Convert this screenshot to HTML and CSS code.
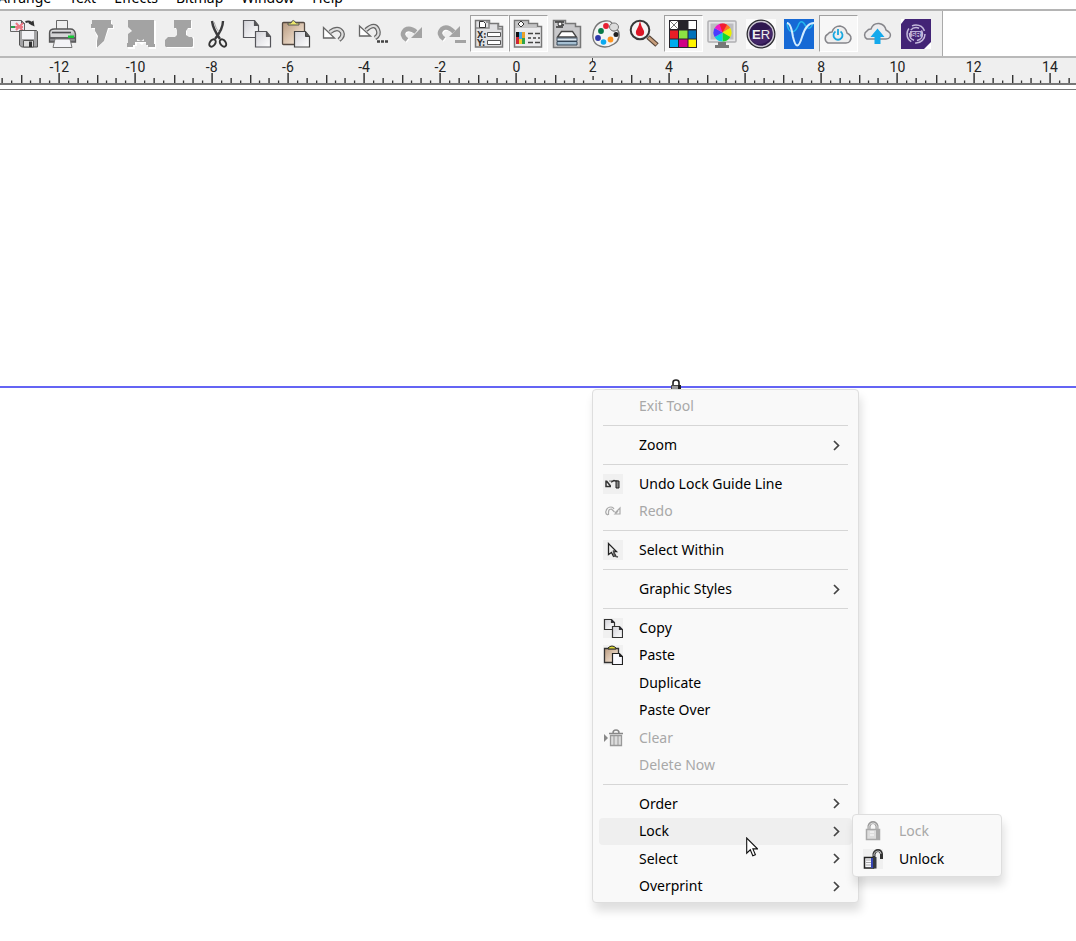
FILE: index.html
```html
<!DOCTYPE html>
<html lang="en">
<head>
<meta charset="utf-8">
<title>Drawing workspace</title>
<link rel="stylesheet" href="styles.css">
</head>
<body>
<svg class="defs" aria-hidden="true">
  <defs>
    <linearGradient id="paper" x1="0" y1="0" x2="1" y2="1"><stop offset="0" stop-color="#d2d2d8"/><stop offset="1" stop-color="#fff"/></linearGradient>
    <linearGradient id="steel" x1="0" y1="0" x2="0" y2="1"><stop offset="0" stop-color="#e8e8ea"/><stop offset="1" stop-color="#77777c"/></linearGradient>
    <linearGradient id="board" x1="0" y1="0" x2="1" y2="1"><stop offset="0" stop-color="#b99b80"/><stop offset="1" stop-color="#fff2e4"/></linearGradient>
    <symbol id="ticks" viewBox="0 0 76 11" preserveAspectRatio="none">
      <path d="M38 1V11" stroke="#333" stroke-width="1.500"/>
      <path d="M.7 3V11M19 6V11M57 6V11" stroke="#333" stroke-width="1.400"/>
      <path d="M9.500 8.500V11M28.500 8.500V11M47.500 8.500V11M66.500 8.500V11" stroke="#333" stroke-width="1.300"/>
    </symbol>
    <symbol id="ticks-marked" viewBox="0 0 76 11" preserveAspectRatio="none">
      <path d="M38 4V8" stroke="#333" stroke-width="1.400"/>
      <path d="M.7 3V11M19 6V11M57 6V11" stroke="#333" stroke-width="1.400"/>
      <path d="M9.500 8.500V11M28.500 8.500V11M47.500 8.500V11M66.500 8.500V11" stroke="#333" stroke-width="1.300"/>
    </symbol>
    <symbol id="copy" viewBox="0 0 30 30">
      <g fill="url(#paper)" stroke="#55555a" stroke-width="1.2"><path d="M1.500 1.500h11l4 5v12h-15z"/><path d="M12.500 1.500v5h4" fill="#555"/><path d="M13.500 12.500h11l4 5v10.500h-15z"/><path d="M24.500 12.500v5h4" fill="#555"/></g>
    </symbol>
    <symbol id="paste" viewBox="0 0 30 30">
      <rect x="1.500" y="3.500" width="22" height="22" rx="1" fill="url(#board)" stroke="#554a42" stroke-width="1.3"/>
      <path d="M7 6V4h3q2-5 5 0h3v2z" fill="#ece76b" stroke="#555" />
      <path d="M13.500 12.500h11l4 5v10.500h-15z" fill="url(#paper)" stroke="#444" stroke-width="1.2"/><path d="M24.500 12.500v5h4" fill="#555" stroke="#444"/>
    </symbol>
    <symbol id="chevron" viewBox="0 0 7 11"><path d="M1 1l4.500 4.500L1 10" fill="none" stroke="#444" stroke-width="1.7"/></symbol>
  </defs>
</svg>

<nav class="menubar" aria-label="Main menu">
  <a href="#">Arrange</a><a href="#">Text</a><a href="#">Effects</a><a href="#">Bitmap</a><a href="#">Window</a><a href="#">Help</a>
</nav>

<div class="toolbar-row">
  <div class="toolbar" role="toolbar" aria-label="Standard">
    <button class="tool" aria-label="Save as"><svg viewBox="0 0 30 30">
      <path d="M1.500 1.500h11l3 3v8h-14z" fill="#ececf1" stroke="#666"/><path d="M12.500 1.500v3h3" fill="#777" stroke="#555"/>
      <path d="M2 8h5" stroke="#28a04b" stroke-width="2"/><path d="M7 4l7 8M14 4l-7 7M6 8h8" stroke="#eb7783" stroke-width="2"/>
      <path d="M16.500 3q5-2 7 3" fill="none" stroke="#333" stroke-width="2"/><path d="M19.500 4.500l6 3-1-6z" fill="#333"/>
      <path d="M10.500 11.500h17l1 1v15.500h-16l-2-2z" fill="#a3a3a5" stroke="#555"/><path d="M13 12h12v8H13z" fill="#f2f2f5"/><path d="M14.500 21.500h10V28h-10z" fill="#ddd" stroke="#555"/><path d="M20 22.500h3V28h-3z" fill="#333"/></svg></button>
    <button class="tool" aria-label="Print"><svg viewBox="0 0 30 30">
      <path d="M8.500 1.500h11V12h-11z" fill="#eee" stroke="#666"/><path d="M1.500 14q0-4 5-4h16q4 0 5 5v8h-26z" fill="url(#steel)" stroke="#555" stroke-width="1.300"/>
      <path d="M4 13.500h19M2 19h25" stroke="#4d4d50" stroke-width="1.500"/><path d="M3 15h19v3H3z" fill="#d6d6d8"/><path d="M7 20h15l2 8.500H5z" fill="#f3f3f6" stroke="#777"/><rect x="20" y="16.500" width="6" height="2.500" fill="#16c936"/></svg></button>
    <button class="tool" aria-label="Cut tool"><svg viewBox="0 0 30 30"><path d="M5 1h19v4l2 1v3h-5l-5 13-8 6.500V22l1-5-2-5v-3H4V5h1z" fill="#fff" transform="translate(1 1)"/><path d="M5 1h19v4l2 1v3h-5l-4 13-7 6.500V22l1-5-3-5v-3H4V5h1z" fill="#a3a3a3"/></svg></button>
    <button class="tool" aria-label="Engrave"><svg viewBox="0 0 30 30"><path d="M1 1h28v24h1v4h-8v-3h-2v-3h-3l-2 2-3-2h-2v3H8v3H1v-4h1v-9l4-3-4-4z" fill="#fff" transform="translate(1 1)"/><path d="M2 1h26v24h1v3h-7v-2h-2v-3H9v3H7v2H1v-4h1v-9l4-3-4-4z" fill="#a3a3a3"/><path d="M11 22v-2l2 1 2 1 3-2v2z" fill="#efefef"/></svg></button>
    <button class="tool" aria-label="Stamp"><svg viewBox="0 0 30 30"><path d="M10 1h17v8h-5v8h7v11H2V20l4-2h7V9h-3z" fill="#fff" transform="translate(1 1)"/><path d="M10 1h17v8h-3l-2 3v4l3 2h3l1 2v7l-1 1H2l-1-1v-6l3-3h7l2-2v-5l-1-2h-2z" fill="#a3a3a3"/></svg></button>
    <button class="tool" aria-label="Cut"><svg viewBox="0 0 30 30"><path d="M9 2q1 8 8 18M20 2q0 8-8 18" stroke="#3b3b3d" stroke-width="2.400" fill="none"/><path d="M11 3q2 7 5 10" stroke="#aaa" fill="none"/><ellipse cx="9.500" cy="24" rx="2.700" ry="4" transform="rotate(35 9.500 24)" fill="none" stroke="#333" stroke-width="2"/><ellipse cx="20" cy="24" rx="2.700" ry="4" transform="rotate(-35 20 24)" fill="none" stroke="#333" stroke-width="2"/></svg></button>
    <button class="tool" aria-label="Copy"><svg><use href="#copy"/></svg></button>
    <button class="tool" aria-label="Paste"><svg><use href="#paste"/></svg></button>
    <button class="tool" aria-label="Undo"><svg viewBox="0 0 30 30"><path d="M11 13q8-6 12 0 2 4-3 8" fill="none" stroke="#666" stroke-width="4.600"/><path d="M11 13q8-6 12 0 2 4-3 8" fill="none" stroke="#ddd" stroke-width="2.200"/><path d="M4.500 8.500v10.500h11z" fill="#fff" stroke="#666" stroke-width="1.300"/></svg></button>
    <button class="tool" aria-label="Undo list"><svg viewBox="0 0 30 30"><path d="M8 11q9-8 12 0 2 5-3 8" fill="none" stroke="#666" stroke-width="4.600"/><path d="M8 11q9-8 12 0 2 5-3 8" fill="none" stroke="#ddd" stroke-width="2.200"/><path d="M1.500 7v10h11z" fill="#fff" stroke="#666" stroke-width="1.300"/><path d="M19 22.500h3m1 0h3m1 0h3" stroke="#444" stroke-width="2.500"/></svg></button>
    <button class="tool" aria-label="Redo"><svg viewBox="0 0 30 30"><path d="M10 21q-7-5-2-10 5-3 11 2" fill="none" stroke="#fff" stroke-width="4.500" transform="translate(1 1)"/><path d="M10 21q-7-5-2-10 5-3 11 2" fill="none" stroke="#a3a3a3" stroke-width="4.500"/><path d="M25 8v11H14z" fill="#a3a3a3"/></svg></button>
    <button class="tool" aria-label="Redo list"><svg viewBox="0 0 30 30"><path d="M8 20q-7-5-2-10 5-4 12 3" fill="none" stroke="#fff" stroke-width="4.500" transform="translate(1 1)"/><path d="M8 20q-7-5-2-10 5-4 12 3" fill="none" stroke="#a3a3a3" stroke-width="4.500"/><path d="M24 7v11H13z" fill="#a3a3a3"/><path d="M19 22.500h11" stroke="#a3a3a3" stroke-width="3"/></svg></button>
    <button class="tool pressed" aria-label="Property bar" aria-pressed="true"><svg viewBox="0 0 30 30">
      <path d="M1.500 1.500h14v3h9v3h4v20.500h-27z" fill="#e1e1e3" stroke="#777" stroke-width="1.500"/><path d="M12 3h3v6H2M24 5v5h4" fill="none" stroke="#888" stroke-width="1.500"/><path d="M5.500 2.500h4l2 2v4h-6z" fill="#fff" stroke="#333"/>
      <path d="M13.500 13.500h13v4h-13zM13.500 21.500h13v4h-13z" fill="#fff" stroke="#555"/><text x="3" y="18.500" class="mini">X:</text><text x="3" y="26.500" class="mini">Y:</text></svg></button>
    <button class="tool pressed" aria-label="Control box" aria-pressed="true"><svg viewBox="0 0 30 30">
      <path d="M1.500 1.500h14v3h9v3h4v20.500h-27z" fill="#ebebed" stroke="#777" stroke-width="1.500"/><path d="M2 2h13v3h9v4H2z" fill="#aaa" opacity=".6"/><path d="M8 2l3 3-3 3-3-3z" fill="#fff" stroke="#333"/>
      <path d="M3 13h3v7H3z" fill="#111"/><path d="M6 13h3v11H6z" fill="#45a3e5"/><path d="M9 13h3v11H9z" fill="#eaa12d"/><path d="M3 18h3v7H3z" fill="#cf2635"/><path d="M6 20h3v5H6z" fill="#f2d02d"/><path d="M9 19h3v6H9z" fill="#30a34b"/><path d="M15 14.500h5m2 0h5M15 19h3m2 0h3m2 0h2M15 23.500h5m2 0h5" stroke="#444" stroke-width="1.500"/></svg></button>
    <button class="tool" aria-label="Layers"><svg viewBox="0 0 30 30">
      <path d="M1.500 1.500h12v3h10v3h5v21h-27z" fill="#c8c8ca" stroke="#777" stroke-width="1.500"/><path d="M3 3h9M6 6h6M4 8h7" stroke="#333" stroke-width="1.500"/><circle cx="8" cy="5" r="2" fill="#fff" stroke="#333"/>
      <path d="M5.500 18l4-5.500h11l4 5.500z" fill="#fff" stroke="#444" stroke-width="1.300"/><path d="M5 19h20v3H5z" fill="#dce8f0" stroke="#456"/><path d="M5 22.500h20v3.500H5z" fill="#a5bfd2" stroke="#345"/></svg></button>
    <button class="tool" aria-label="Palette"><svg viewBox="0 0 30 30">
      <path d="M14 2c7-1 8 3 7 7-1 3 3 4 5 1 4 5 2 12-3 15-9 6-20 2-21-6C1 10 6 3 14 2z" fill="#f3f3f3" stroke="#777" stroke-width="1.400"/><ellipse cx="23" cy="8" rx="4.500" ry="4" fill="#ddd" stroke="#777"/>
      <circle cx="15" cy="7" r="2.900" fill="#e81f32"/><circle cx="10" cy="12" r="2.900" fill="#087947"/><circle cx="7" cy="19" r="2.900" fill="#2d37aa"/><circle cx="12.500" cy="23" r="2.800" fill="#0aaaf0"/><circle cx="19.500" cy="20.500" r="2.900" fill="#ff9420"/><circle cx="25" cy="15.500" r="2.500" fill="#222"/></svg></button>
    <button class="tool" aria-label="Color finder"><svg viewBox="0 0 30 30">
      <path d="M19 18l9 8" stroke="#544236" stroke-width="5"/><path d="M19.500 18.500l8 7" stroke="#c79e7c" stroke-width="2.600"/><circle cx="11" cy="11" r="9.300" fill="#f5f3f3" stroke="#383838" stroke-width="2"/><path d="M11 2q-1 5-4 10-1 5 4 5t4-5q-3-5-4-10z" fill="#dc1626"/></svg></button>
    <button class="tool pressed" aria-label="Color palette" aria-pressed="true"><svg viewBox="0 0 30 30">
      <path d="M1 1h28v28H1z" fill="#26232a"/><path d="M2 2h8v8H2zM20.500 2H28v8h-7.500z" fill="#fff"/><path d="M2 2l8 8M10 2l-8 8" stroke="#777"/><path d="M2 11.500h8v8H2z" fill="#e71d26"/><path d="M11 11.500h8.500v8H11z" fill="#8ce343"/><path d="M20.500 11.500H28v8h-7.500z" fill="#0071b9"/><path d="M2 20.500h8V28H2z" fill="#00aced"/><path d="M11 20.500h8.500V28H11z" fill="#d00085"/><path d="M20.500 20.500H28V28h-7.500z" fill="#fff500"/></svg></button>
    <button class="tool" aria-label="Color management"><svg viewBox="0 0 30 30">
      <rect x="1" y="2" width="28" height="21" rx="1" fill="#e6e6e8" stroke="#b0b0b2" stroke-width="1.500"/><path d="M3.500 4.500h23v16h-23z" fill="#bcbcc0"/><path d="M11 23h8v3h3v3H8v-3h3z" fill="#777"/>
      <g transform="translate(15.500 13.500)"><path d="M0 0L0-9A9 9 0 0 1 7.800-4.500z" fill="#ff7921"/><path d="M0 0L7.800-4.500A9 9 0 0 1 7.800 4.500z" fill="#e8ef00"/><path d="M0 0L7.800 4.500A9 9 0 0 1 0 9z" fill="#16d72d"/><path d="M0 0L0 9A9 9 0 0 1-7.800 4.500z" fill="#08cfe2"/><path d="M0 0L-7.800 4.500A9 9 0 0 1-7.800-4.500z" fill="#4b3cff"/><path d="M0 0L-7.800-4.500A9 9 0 0 1 0-9z" fill="#f01ac4"/><path d="M0 0L-3-8.500A9 9 0 0 1 4.500-7.800z" fill="#f31c32"/></g></svg></button>
    <button class="tool" aria-label="ER"><svg viewBox="0 0 30 30"><path d="M0 0h30v30H0z" fill="#fbfbfb"/><circle cx="15" cy="15" r="14.500" fill="#29292e"/><circle cx="15" cy="15" r="12.500" fill="#2e174f" stroke="#cbc6d2" stroke-width="1.500"/><path d="M4 20q11-8 22-11v8q-5 9-16 8z" fill="#51307a" opacity=".6"/><text x="15" y="19.500" class="badge">E<tspan class="light">R</tspan></text></svg></button>
    <button class="tool" aria-label="Curves"><svg viewBox="0 0 30 30"><path d="M0 0h30v30H0z" fill="#1669d5"/><path d="M3 4c1 10 7 12 11 3 2-6 5-5 7-1 3 5 6 4 8-2" fill="none" stroke="#24b7ed" stroke-width="1.500"/><path d="M3 4q4 0 6 14 4 17 9 0Q22 4 30 4" fill="none" stroke="#d2ecff" stroke-width="2"/></svg></button>
    <button class="tool pressed" aria-label="Cloud power" aria-pressed="true"><svg viewBox="0 0 30 30"><path d="M5 24a5 5 0 0 1 0-9q1-2 4-2 2-6 8-6 6 1 7 7 6 3 3 8-1 2-4 2z" fill="#eee" stroke="#85858a" stroke-width="1.500"/><path d="M12.500 12.500a4.500 4.500 0 1 0 5 0" fill="none" stroke="#17a7df" stroke-width="1.800"/><path d="M15 10v6" stroke="#17a7df" stroke-width="1.800"/></svg></button>
    <button class="tool" aria-label="Cloud upload"><svg viewBox="0 0 30 30"><path d="M5 20a4.500 4.500 0 0 1 0-8q1-2 4-2 2-6 8-5.500 6 1 7 6.500 6 3 4 7-1 2-4 2z" fill="#ececee" stroke="#85858a" stroke-width="1.500"/><path d="M15.500 9.500l7 8.500h-4v7h-6v-7h-4z" fill="#14a9ec"/></svg></button>
    <button class="tool" aria-label="SR"><svg viewBox="0 0 30 30"><path d="M0 0h30v30H0z" fill="#fff"/><path d="M4 0h26v23l-7 7H0V5z" fill="#432476"/><g fill="none" stroke="#c4b9dc"><circle cx="15" cy="15" r="9" stroke-width="1.500" stroke-dasharray="15 4"/><circle cx="15" cy="15" r="6.500" stroke-width="1.500" stroke-dasharray="9 3"/></g><path d="M9 12h12v6H9z" fill="#bdb1d7"/><text x="15" y="17.500" class="tiny">SR</text></svg></button>
  </div>
</div>

<div class="ruler" aria-label="Horizontal ruler">
  <div class="ruler-scale">
    <div class="unit"><span></span><svg><use href="#ticks"/></svg></div>
    <div class="unit"><span>-12</span><svg><use href="#ticks"/></svg></div>
    <div class="unit"><span>-10</span><svg><use href="#ticks"/></svg></div>
    <div class="unit"><span>-8</span><svg><use href="#ticks"/></svg></div>
    <div class="unit"><span>-6</span><svg><use href="#ticks"/></svg></div>
    <div class="unit"><span>-4</span><svg><use href="#ticks"/></svg></div>
    <div class="unit"><span>-2</span><svg><use href="#ticks"/></svg></div>
    <div class="unit"><span>0</span><svg><use href="#ticks"/></svg></div>
    <div class="unit pointer"><span>2</span><svg><use href="#ticks-marked"/></svg></div>
    <div class="unit"><span>4</span><svg><use href="#ticks"/></svg></div>
    <div class="unit"><span>6</span><svg><use href="#ticks"/></svg></div>
    <div class="unit"><span>8</span><svg><use href="#ticks"/></svg></div>
    <div class="unit"><span>10</span><svg><use href="#ticks"/></svg></div>
    <div class="unit"><span>12</span><svg><use href="#ticks"/></svg></div>
    <div class="unit"><span>14</span><svg><use href="#ticks"/></svg></div>
  </div>
</div>

<main class="canvas">
  <div class="guide"></div>
  <svg class="guide-lock" viewBox="0 0 10 12"><path d="M2 7V3.500Q2 1 5 1t3 2.500V7" fill="none" stroke="#222" stroke-width="1.600"/><path d="M.5 6.500h9V12h-9z" fill="#999" stroke="#444"/><path d="M7 6h3v6H7z" fill="#222"/></svg>

  <div class="menu context" role="menu">
    <div class="group one"><button class="item" role="menuitem" disabled><span class="icon"></span>Exit Tool</button></div>
    <div class="group one"><button class="item" role="menuitem"><span class="icon"></span>Zoom<svg class="chevron"><use href="#chevron"/></svg></button></div>
    <div class="group two">
      <button class="item" role="menuitem"><span class="icon tile"><svg viewBox="0 0 20 20"><path d="M3 6.500v6h5M3.500 7l4 5M8 8l3-1.500 4 1" fill="none" stroke="#333" stroke-width="1.500"/><path d="M6 7h3" stroke="#777"/><path d="M13 7h3v7h-3z" fill="#888" stroke="#222"/></svg></span>Undo Lock Guide Line</button>
      <button class="item" role="menuitem" disabled><span class="icon"><svg viewBox="0 0 20 20"><path d="M5 14q-3-1-2-4 1-4 5-4 2 0 3 2M5.500 14V11q0-3 3-3l3 3M12 12l5-5v6h-5l3-3" fill="none" stroke="#aaa" stroke-width="1.200"/></svg></span>Redo</button>
    </div>
    <div class="group one"><button class="item" role="menuitem"><span class="icon tile"><svg viewBox="0 0 20 20"><path d="M5.500 3.500v11l3-2 2 4 2-1-2-4h3z" fill="#eee" stroke="#222" stroke-width="1.300"/><path d="M11 10v6l4 1" fill="none" stroke="#555" stroke-width="1.500"/></svg></span>Select Within</button></div>
    <div class="group one"><button class="item" role="menuitem"><span class="icon"></span>Graphic Styles<svg class="chevron"><use href="#chevron"/></svg></button></div>
    <div class="group six">
      <button class="item" role="menuitem"><span class="icon tile"><svg viewBox="0 0 20 20"><g fill="url(#paper)" stroke="#333" stroke-width="1.200"><path d="M1.500 1.500h7l3 3v7h-10z"/><path d="M8.500 1.500v3h3" fill="#223"/><path d="M9.500 8.500h7l3 3v8h-10z"/><path d="M16.500 8.500v3h3" fill="#223"/></g></svg></span>Copy</button>
      <button class="item" role="menuitem"><span class="icon tile"><svg viewBox="0 0 20 20"><path d="M1.500 3.500h14v14h-14z" fill="url(#board)" stroke="#333" stroke-width="1.300"/><path d="M5 4V3q4-4 8 0v1z" fill="#e0dc37" stroke="#222"/><path d="M9.500 8.500h7l3 3v8h-10z" fill="#fafaff" stroke="#222" stroke-width="1.200"/><path d="M16.500 8.500v3h3" fill="#222" stroke="#222"/></svg></span>Paste</button>
      <button class="item" role="menuitem"><span class="icon"></span>Duplicate</button>
      <button class="item" role="menuitem"><span class="icon"></span>Paste Over</button>
      <button class="item" role="menuitem" disabled><span class="icon"><svg viewBox="0 0 20 20"><path d="M1 6l4 4-4 4z" fill="#888"/><path d="M6 5.500h14M10 5q0-3 3-3t3 3" fill="none" stroke="#888" stroke-width="1.500"/><path d="M7.500 7.500h11v10h-11z" fill="#ddd" stroke="#999" stroke-width="1.300"/><path d="M11 8v9M15 8v9" stroke="#999"/></svg></span>Clear</button>
      <button class="item" role="menuitem" disabled><span class="icon"></span>Delete Now</button>
    </div>
    <div class="group four">
      <button class="item" role="menuitem"><span class="icon"></span>Order<svg class="chevron"><use href="#chevron"/></svg></button>
      <div class="branch">
        <button class="item active" role="menuitem" aria-expanded="true"><span class="icon"></span>Lock<svg class="chevron"><use href="#chevron"/></svg></button>
        <div class="menu submenu" role="menu">
          <div class="group two">
            <button class="item" role="menuitem" disabled><span class="icon"><svg viewBox="0 0 20 20"><path d="M6 9V5q1-3.500 4-3.500T14 5v4" fill="none" stroke="#999" stroke-width="3"/><path d="M6 8V5q1-3 4-3t4 3v3" fill="none" stroke="#ddd" /><path d="M3.500 8.500h13v10h-13z" fill="#ddd" stroke="#aaa" stroke-width="1.500"/><path d="M7 11h4M7 14h4" stroke="#fff"/><path d="M13 9h3v10h-3z" fill="#aaa"/></svg></span>Lock</button>
            <button class="item" role="menuitem"><span class="icon tile"><svg viewBox="0 0 20 20"><path d="M11 9V5q1-3.500 4-3.500T18.500 5v5" fill="none" stroke="#333" stroke-width="3"/><path d="M11 7V5q1-3 4-3t3 3" fill="none" stroke="#bbb"/><path d="M1.500 8.500h9v10.500h-9z" fill="#f7f7fa" stroke="#222" stroke-width="1.500"/><path d="M3 11h6M3 13.500h6M3 16h6" stroke="#aaa"/><path d="M8 9h2v10H8z" fill="#3544b4"/><path d="M10 8h3.500v11.500H10z" fill="#34383e"/></svg></span>Unlock</button>
          </div>
        </div>
      </div>
      <button class="item" role="menuitem"><span class="icon"></span>Select<svg class="chevron"><use href="#chevron"/></svg></button>
      <button class="item" role="menuitem"><span class="icon"></span>Overprint<svg class="chevron"><use href="#chevron"/></svg></button>
    </div>
  </div>
  <svg class="cursor" viewBox="0 0 12 20"><path d="M.7 1v15.200l3.600-3.400 2.500 6 2.600-1.100-2.500-5.800h4.600z" fill="#fff" stroke="#111" stroke-width="1.100"/></svg>
</main>
</body>
</html>
```
FILE: styles.css
```css
* { box-sizing: border-box; }

body {
  margin: 0;
  min-height: 100vh;
  display: flex;
  flex-direction: column;
  overflow-x: hidden;
  background: #fff;
  color: #000;
  font: 14px/20px "Noto Sans", "Open Sans", sans-serif;
}

button { font: inherit; color: inherit; }

.defs {
  position: absolute;
  width: 0;
  height: 0;
}

/* Menu bar */
.menubar {
  height: 9px;
  display: flex;
  align-items: flex-end;
  gap: 18px;
  margin-left: -2px;
  padding-bottom: 1px;
  overflow: hidden;
}

.menubar a { color: #000; text-decoration: none; }

/* Toolbar */
.toolbar-row {
  border-top: 2px solid #b4b4b4;
  border-bottom: 2px solid #b9b9b9;
}

.toolbar {
  max-width: 943px;
  display: grid;
  grid-template-columns: repeat(24, 1fr);
  padding: 4px 7px 4px 5px;
  background: #efefef;
  border-right: 1px solid #aaa;
}

.tool {
  height: 37px;
  padding: 0;
  border: 1px solid transparent;
  background: none;
  display: flex;
  align-items: center;
  justify-content: center;
}

.tool svg { width: 30px; height: 30px; flex: none; }

.tool.pressed {
  background: #f7f7f7;
  border-color: #a0a0a0 #fff #fff #a0a0a0;
}

.mini { font: bold 8px "DejaVu Sans", sans-serif; fill: #333; }
.badge { font: bold 13px "Liberation Sans", sans-serif; fill: #eee; text-anchor: middle; }
.light { font-weight: normal; }
.tiny { font: bold 7px "Liberation Sans", sans-serif; fill: #432476; text-anchor: middle; }

/* Ruler */
.ruler {
  height: 27px;
  overflow: hidden;
  background: #efefef;
  border-bottom: 2px solid #777;
}

.ruler-scale {
  display: grid;
  grid-template-columns: repeat(15, 1fr);
  margin: 0 -12px 0 -55px;
}

.unit {
  height: 25px;
  display: flex;
  flex-direction: column;
  justify-content: space-between;
  align-items: center;
  font: 14px/18px Roboto, "Liberation Sans", sans-serif;
  color: #222;
}

.unit span { height: 14px; }
.unit svg { width: 100%; height: 11px; }

.pointer { background: linear-gradient(#444, #444) center top / 1px 3px no-repeat; }

/* Drawing area */
.canvas {
  position: relative;
  flex: 1;
  min-height: 840px;
  margin-top: 4px;
  border-top: 1px solid #777;
}

.guide {
  position: absolute;
  top: 296px;
  left: 0;
  right: 0;
  height: 2px;
  background: #6464f4;
}

.guide-lock {
  position: absolute;
  left: 671px;
  top: 289px;
  width: 10px;
  height: 12px;
}

.cursor {
  position: absolute;
  left: 746px;
  top: 747px;
  width: 12px;
  height: 20px;
}

/* Menus */
.menu {
  position: absolute;
  background: #f9f9f9;
  border: 1px solid #dedede;
  border-radius: 4px;
  box-shadow: 2px 8px 10px rgba(0, 0, 0, .13);
}

.context {
  left: 592px;
  top: 299px;
  width: 267px;
  padding: 2px 6px;
}

.submenu {
  left: 253px;
  top: -4px;
  width: 150px;
  padding: 3px 6px;
}

.group { display: grid; grid-auto-rows: 1fr; }
.one { height: 28px; }
.two { height: 55px; }
.four { height: 110px; }
.six { height: 165px; }

.group + .group { margin-top: 11px; position: relative; }

.group + .group::before {
  content: "";
  position: absolute;
  top: -6px;
  left: 4px;
  right: 4px;
  height: 1px;
  background: #d6d6d6;
}

.branch { position: relative; display: grid; }

.item {
  min-width: 0;
  display: flex;
  align-items: center;
  padding: 0 12px 0 4px;
  border: 0;
  border-radius: 4px;
  background: none;
  text-align: left;
  white-space: nowrap;
}

.item:disabled { color: #a8a8a8; }
.item.active { background: #efefef; }

.icon {
  flex: none;
  width: 20px;
  height: 20px;
  margin-right: 16px;
}

.icon svg { display: block; width: 20px; height: 20px; }
.icon.tile { background: #f0f0f0; }

.chevron {
  width: 7px;
  height: 11px;
  margin-left: auto;
}
```
